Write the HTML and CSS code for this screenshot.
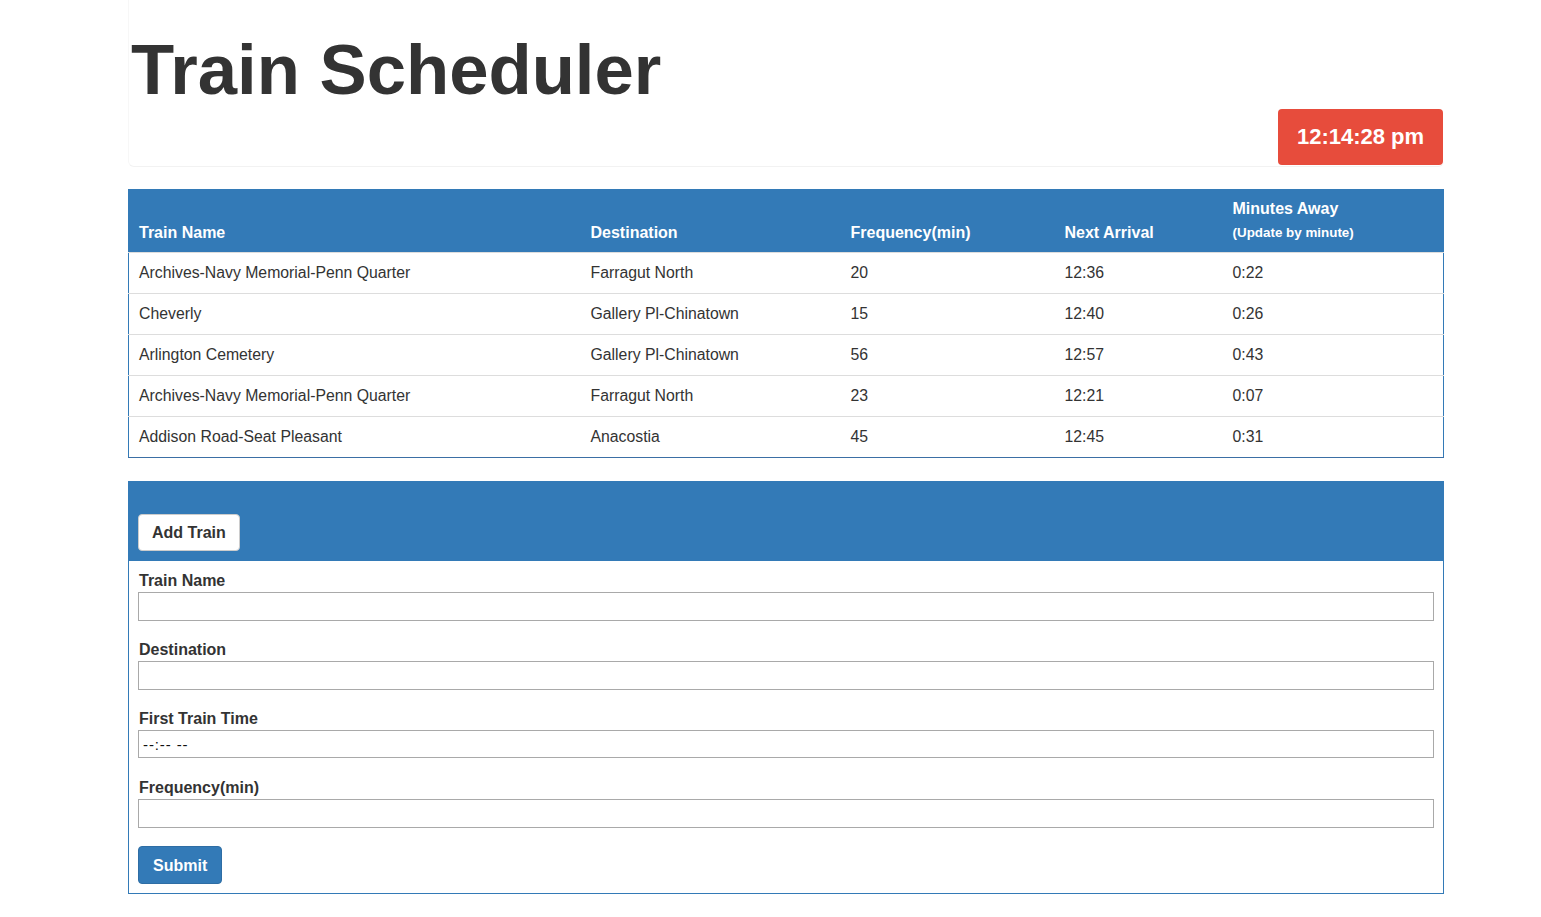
FILE: index.html
```html
<!DOCTYPE html>
<html>
<head>
<meta charset="utf-8">
<title>Train Scheduler</title>
<link rel="stylesheet" href="styles.css">
</head>
<body>
<div class="page">
  <header class="jumbotron">
    <h1 class="title">Train Scheduler</h1>
    <div class="clock-row">
      <div class="clock">12:14:28 pm</div>
    </div>
  </header>

  <table class="schedule">
    <thead>
      <tr>
        <th class="c-name">Train Name</th>
        <th class="c-dest">Destination</th>
        <th class="c-freq">Frequency(min)</th>
        <th class="c-next">Next Arrival</th>
        <th class="c-away">Minutes Away<br><small>(Update by minute)</small></th>
      </tr>
    </thead>
    <tbody>
      <tr><td>Archives-Navy Memorial-Penn Quarter</td><td>Farragut North</td><td>20</td><td>12:36</td><td>0:22</td></tr>
      <tr><td>Cheverly</td><td>Gallery Pl-Chinatown</td><td>15</td><td>12:40</td><td>0:26</td></tr>
      <tr><td>Arlington Cemetery</td><td>Gallery Pl-Chinatown</td><td>56</td><td>12:57</td><td>0:43</td></tr>
      <tr><td>Archives-Navy Memorial-Penn Quarter</td><td>Farragut North</td><td>23</td><td>12:21</td><td>0:07</td></tr>
      <tr><td>Addison Road-Seat Pleasant</td><td>Anacostia</td><td>45</td><td>12:45</td><td>0:31</td></tr>
    </tbody>
  </table>

  <section class="panel">
    <div class="panel-heading">
      <button class="btn btn-default" type="button">Add Train</button>
    </div>
    <form class="panel-body">
      <div class="group">
        <label for="name">Train Name</label>
        <input id="name" class="field" type="text">
      </div>
      <div class="group">
        <label for="dest">Destination</label>
        <input id="dest" class="field" type="text">
      </div>
      <div class="group group-time">
        <label for="first">First Train Time</label>
        <input id="first" class="field field-time" type="text" value="--:-- --">
      </div>
      <div class="group group-last">
        <label for="freq">Frequency(min)</label>
        <input id="freq" class="field" type="text">
      </div>
      <button class="btn btn-primary" type="button">Submit</button>
    </form>
  </section>
</div>
</body>
</html>
```
FILE: styles.css
```css
* { box-sizing: border-box; }

html, body {
  margin: 0;
  padding: 0;
  background: #fff;
}

body {
  font-family: "Liberation Sans", Arial, Helvetica, sans-serif;
  font-size: 16px;
  color: #333;
}

.page {
  width: 1316px;
  margin-left: 128px;
  padding-bottom: 24px;
}

/* Header */
.jumbotron {
  border-bottom: 1px solid #f2f2f2;
  border-left: 1px solid #f7f7f7;
  border-radius: 0 0 6px 6px;
  padding: 31px 0 0 0;
  height: 167px;
}

.title {
  margin: 0 0 0 2px;
  font-size: 70.7px;
  line-height: 77px;
  font-weight: bold;
  color: #333;
}

.clock-row {
  display: flex;
  justify-content: flex-end;
  padding-top: 1px;
}

.clock {
  width: 165px;
  height: 56px;
  margin-right: 1px;
  background: #e74c3c;
  color: #fff;
  font-weight: bold;
  font-size: 22px;
  border-radius: 4px;
  display: flex;
  align-items: center;
  justify-content: center;
}

/* Table */
.schedule {
  margin-top: 22px;
  width: 1316px;
  border-collapse: collapse;
  border-left: 1px solid #337ab7;
  border-right: 1px solid #337ab7;
  border-bottom: 1px solid #3b6fa5;
  table-layout: fixed;
}

.schedule th {
  background: #337ab7;
  color: #fff;
  text-align: left;
  vertical-align: bottom;
  font-weight: bold;
  font-size: 16px;
  line-height: 23px;
  padding: 8px 10px 8px 10px;
  border-bottom: 1px solid #ddd;
}

.schedule th small {
  font-size: 13.4px;
}

.c-name { width: 452px; }
.c-dest { width: 260px; }
.c-freq { width: 214px; }
.c-next { width: 168px; }
.c-away { width: auto; }

.schedule td {
  padding: 8px 10px;
  font-size: 15.8px;
  line-height: 24px;
  border-top: 1px solid #ddd;
  color: #333;
}

.schedule tbody tr:first-child td {
  border-top: none;
}

/* Panel */
.panel {
  margin-top: 23px;
  border: 1px solid #337ab7;
}

.panel-heading {
  background: #337ab7;
  padding: 32px 9px 10px;
}

.btn {
  font-family: inherit;
  font-size: 16px;
  font-weight: bold;
  line-height: 23px;
  padding: 6px 13px;
  border-radius: 4px;
  cursor: pointer;
}

.btn-default {
  background: #fff;
  color: #333;
  border: 1px solid #ccc;
  height: 37px;
}

.btn-primary {
  background: #337ab7;
  color: #fff;
  border: 1px solid #2e6da4;
  height: 38px;
  padding: 6px 14px;
  margin-top: 18px;
}

.panel-body {
  padding: 8px 9px 9px;
  display: flex;
  flex-direction: column;
  align-items: flex-start;
}

.group {
  width: 100%;
  margin-bottom: 17px;
}

.group-time {
  margin-bottom: 18px;
}

.group-last {
  margin-bottom: 0;
}

.group label {
  display: block;
  font-weight: bold;
  line-height: 23px;
  padding-left: 1px;
  color: #333;
}

.field {
  display: block;
  width: 100%;
  height: 29px;
  border: 1px solid #a9a9a9;
  border-radius: 0;
  background: #fff;
  font-family: inherit;
  font-size: 13.33px;
  padding: 1px 4px;
  color: #333;
}

.field-time {
  height: 28px;
  font-size: 15px;
  letter-spacing: 0.9px;
  color: #111;
}
```
